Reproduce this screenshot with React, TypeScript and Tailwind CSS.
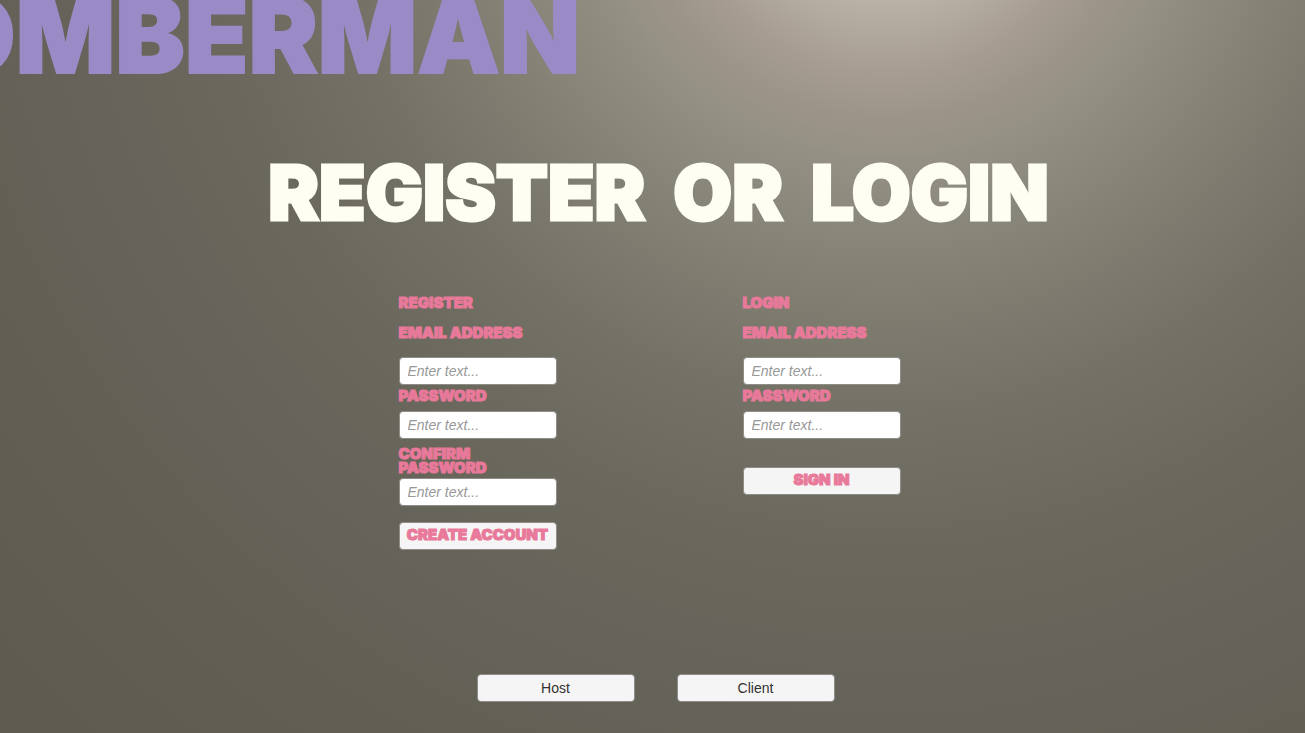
import { useId } from "react";

const comic = "font-['Inter',sans-serif] font-black uppercase";
const labelText = `${comic} text-[15px] leading-[14px] text-[#e8799a] [-webkit-text-stroke:1px_#e8799a]`;
const buttonBox =
  "flex h-7 w-[158px] items-center justify-center whitespace-nowrap rounded border border-[#8f8d88] bg-[#f5f5f5]";

function Field({
  label,
  type,
  className,
  gap,
}: {
  label: string;
  type: string;
  className: string;
  gap: string;
}) {
  const id = useId();
  return (
    <div className={`flex flex-col ${gap} ${className}`}>
      <label htmlFor={id} className={labelText}>
        {label}
      </label>
      <input
        id={id}
        type={type}
        placeholder="Enter text..."
        className="h-7 w-full rounded border border-[#8f8d88] bg-white px-2 font-['Liberation_Sans',Arial,sans-serif] text-sm text-[#323232] italic placeholder:text-[#989898] placeholder:opacity-100"
      />
    </div>
  );
}

export default function App() {
  return (
    <div className="flex min-h-screen flex-col overflow-hidden bg-[radial-gradient(circle_at_68%_-139px,#c0b8ab_110px,#b7afa1_150px,#a79e91_210px,#9d9488_258px,#949184_300px,#8a877b_365px,#7f7c70_450px,#747166_550px,#6b685d_680px,#66635a_820px,#625f55_980px,#5e5b50_1200px)]">
      <header className="flex w-4/9 justify-end">
        <p
          className={`${comic} text-[104px] leading-[70px] text-[#9a8bc7] [-webkit-text-stroke:2px_#9a8bc7]`}
        >
          Bomberman
        </p>
      </header>

      <h1
        className={`${comic} mt-[95px] flex justify-center gap-7 pl-3 text-[76px] leading-[54px] text-[#fffef2] [-webkit-text-stroke:3px_#fffef2]`}
      >
        <span>Register</span> <span>or</span> <span>Login</span>
      </h1>

      <main className="mt-[77px] flex justify-center gap-[186px] pr-1.5">
        <form className="flex w-[158px] flex-col" onSubmit={(e) => e.preventDefault()}>
          <h2 className={labelText}>Register</h2>
          <Field label="Email address" type="email" className="mt-4" gap="gap-[17px]" />
          <Field label="Password" type="password" className="mt-1" gap="gap-2" />
          <Field label="Confirm password" type="password" className="mt-2" gap="gap-[3px]" />
          <button type="submit" className={`mt-4 pb-0.5 ${buttonBox} ${labelText}`}>
            Create account
          </button>
        </form>

        <form className="flex w-[158px] flex-col" onSubmit={(e) => e.preventDefault()}>
          <h2 className={labelText}>Login</h2>
          <Field label="Email address" type="email" className="mt-4" gap="gap-[17px]" />
          <Field label="Password" type="password" className="mt-1" gap="gap-2" />
          <button type="submit" className={`mt-7 pb-0.5 ${buttonBox} ${labelText}`}>
            Sign in
          </button>
        </form>
      </main>

      <footer className="mt-auto flex justify-center gap-[42px] pt-8 pb-[31px] pl-1.5">
        {["Host", "Client"].map((name) => (
          <button
            key={name}
            type="button"
            className={`${buttonBox} font-['Liberation_Sans',Arial,sans-serif] text-sm text-[#323232]`}
          >
            {name}
          </button>
        ))}
      </footer>
    </div>
  );
}
